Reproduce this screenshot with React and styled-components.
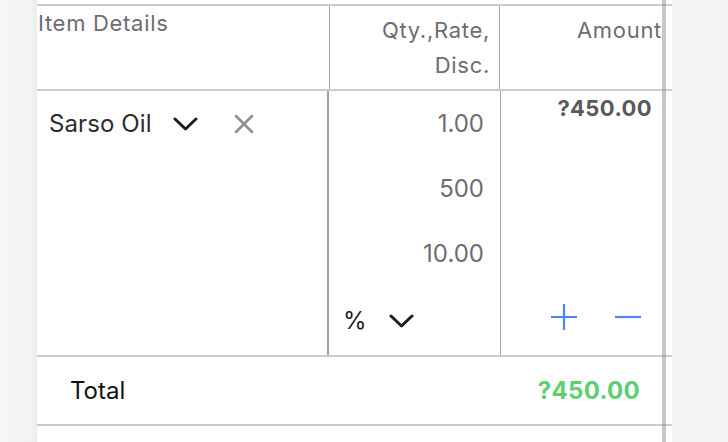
import React from 'react'
import styled, { createGlobalStyle } from 'styled-components'

const Global = createGlobalStyle`
    html, body {
        margin: 0;
        padding: 0;
        background: #f4f5f5;
        font-family: Inter, "Noto Sans", "Liberation Sans", sans-serif;
    }
    * {
        box-sizing: border-box;
    }
`

const Page = styled.div`
    height: 442px;
    overflow: hidden;
    background: linear-gradient(to right, #f5f6f6 0, #f2f3f3 30px, #eaebeb 37px, #f4f5f5 37px);
`

const Sheet = styled.div`
    position: relative;
    margin-left: 37px;
    width: 635px;
    height: 442px;
    background: #ffffff;
    padding-top: 4px;
`

const ScrollBar = styled.div`
    position: absolute;
    top: 0;
    bottom: 0;
    left: 625px;
    width: 4px;
    background: rgba(130, 130, 135, 0.45);
`

const Row = styled.div`
    display: grid;
    grid-template-columns: ${(p) => p.$cols || '292px 172px 161px 10px'};
    border-top: ${(p) => (p.$top ? '2px solid #cbcbcf' : 'none')};
    border-bottom: 2px solid #cbcbcf;
    height: ${(p) => p.$height}px;
`

const HeadCell = styled.div`
    font-size: 22px;
    letter-spacing: 0.7px;
    line-height: ${(p) => p.$lh || 22}px;
    color: #6d6d72;
    padding-top: ${(p) => p.$pt || 7}px;
    text-align: ${(p) => p.$align || 'left'};
    padding-right: ${(p) => p.$pr || 0}px;
    padding-left: ${(p) => p.$pl || 0}px;
    border-left: ${(p) => (p.$divider ? '1px solid #a8a8ad' : 'none')};
    white-space: ${(p) => (p.$wrap ? 'normal' : 'nowrap')};
`

const ItemCell = styled.div`
    padding: 21px 0 0 12px;
    border-right: 2px solid #a2a2a7;
    display: flex;
    align-items: flex-start;
`

const ItemLine = styled.div`
    display: flex;
    align-items: center;
    height: 24px;
`

const ItemName = styled.span`
    font-size: 24px;
    line-height: 24px;
    letter-spacing: 0.1px;
    color: #2c2c2e;
`

const IconBtn = styled.span`
    display: inline-flex;
    margin-left: ${(p) => p.$ml}px;
`

const QtyCell = styled.div`
    display: flex;
    flex-direction: column;
    justify-content: space-between;
    padding: 21px 0 22px 14px;
    border-right: 1px solid #a8a8ad;
`

const Values = styled.div`
    display: flex;
    flex-direction: column;
    align-items: flex-end;
    gap: 41px;
    padding-right: 16px;
`

const Value = styled.div`
    font-size: 24px;
    line-height: 24px;
    color: #6d6d72;
`

const DiscType = styled.div`
    display: flex;
    align-items: center;
    height: 24px;
`

const Percent = styled.span`
    font-size: 24px;
    line-height: 24px;
    color: #1c1c1e;
`

const AmountCell = styled.div`
    display: flex;
    flex-direction: column;
    justify-content: space-between;
    align-items: flex-end;
    padding: 6px 10px 24px 0;
`

const Amount = styled.div`
    font-size: 22px;
    line-height: 22px;
    font-weight: 700;
    letter-spacing: 0.4px;
    color: #59595e;
`

const Actions = styled.div`
    display: flex;
    align-items: center;
    gap: 36px;
    padding-right: 10px;
`

const TotalLabel = styled.div`
    display: flex;
    align-items: center;
    padding-left: 33px;
    font-size: 24px;
    color: #111111;
`

const TotalAmount = styled.div`
    grid-column: 2 / 4;
    display: flex;
    align-items: center;
    justify-content: flex-end;
    padding-right: 22px;
    font-size: 24px;
    font-weight: 700;
    letter-spacing: 0.3px;
    color: #5fcd72;
`

const Chevron = () => (
    <svg width="25" height="14" viewBox="0 0 25 14" fill="none">
        <path d="M2 2 L12.5 12 L23 2" stroke="#1c1c1e" strokeWidth="3" strokeLinecap="round" strokeLinejoin="round" />
    </svg>
)

const Cross = () => (
    <svg width="20" height="20" viewBox="0 0 20 20" fill="none">
        <path d="M2 2 L18 18 M18 2 L2 18" stroke="#8e8e93" strokeWidth="2.6" strokeLinecap="round" />
    </svg>
)

const Plus = () => (
    <svg width="28" height="28" viewBox="0 0 28 28" fill="none">
        <path d="M14 1 V27 M1 14 H27" stroke="#4a86f7" strokeWidth="2.2" />
    </svg>
)

const Minus = () => (
    <svg width="28" height="28" viewBox="0 0 28 28" fill="none">
        <path d="M1 14 H27" stroke="#4a86f7" strokeWidth="2.2" />
    </svg>
)

export default function App() {
    return (
        <Page>
            <Global />
            <Sheet>
                <Row $top $height={87} $cols="292px 170px 163px 10px">
                    <HeadCell $pl={1} $pt={6}>Item Details</HeadCell>
                    <HeadCell $divider $align="right" $pr={9} $lh={35} $wrap>
                        Qty.,Rate,<br />Disc.
                    </HeadCell>
                    <HeadCell $divider $align="right" $lh={35}>Amount</HeadCell>
                    <div />
                </Row>
                <Row $height={266}>
                    <ItemCell>
                        <ItemLine>
                            <ItemName>Sarso Oil</ItemName>
                            <IconBtn $ml={21}><Chevron /></IconBtn>
                            <IconBtn $ml={36}><Cross /></IconBtn>
                        </ItemLine>
                    </ItemCell>
                    <QtyCell>
                        <Values>
                            <Value>1.00</Value>
                            <Value>500</Value>
                            <Value>10.00</Value>
                        </Values>
                        <DiscType>
                            <Percent>%</Percent>
                            <IconBtn $ml={22}><Chevron /></IconBtn>
                        </DiscType>
                    </QtyCell>
                    <AmountCell>
                        <Amount>?450.00</Amount>
                        <Actions>
                            <Plus />
                            <Minus />
                        </Actions>
                    </AmountCell>
                    <div />
                </Row>
                <Row $height={69}>
                    <TotalLabel>Total</TotalLabel>
                    <TotalAmount>?450.00</TotalAmount>
                </Row>
                <ScrollBar />
            </Sheet>
        </Page>
    )
}
